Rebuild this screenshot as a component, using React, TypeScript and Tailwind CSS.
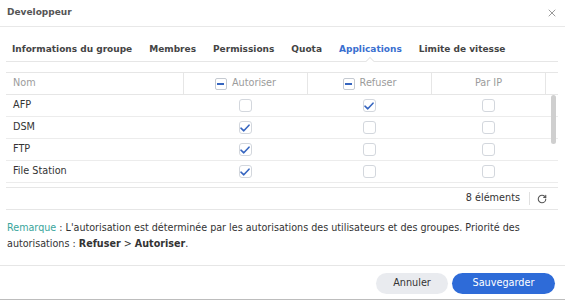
import { RotateCw, X } from 'lucide-react'

const rows = [
  { name: 'AFP', allow: false, deny: true },
  { name: 'DSM', allow: true, deny: false },
  { name: 'FTP', allow: true, deny: false },
  { name: 'File Station', allow: true, deny: false },
  { name: '', allow: false, deny: false },
]

const tabs = [
  'Informations du groupe',
  'Membres',
  'Permissions',
  'Quota',
  'Applications',
  'Limite de vitesse',
]

function Checkbox({ checked }: { checked?: boolean }) {
  return (
    <span className="flex size-[13px] items-center justify-center rounded-[3px] border border-[#d3d7dd] bg-white">
      {checked && (
        <svg width="10" height="8" viewBox="0 0 10 8" fill="none">
          <path
            d="M1 4.2 3.8 6.8 9 1.2"
            stroke="#3766c0"
            strokeWidth="1.6"
            strokeLinecap="round"
            strokeLinejoin="round"
          />
        </svg>
      )}
    </span>
  )
}

function MinusBox() {
  return (
    <span className="flex size-[12px] items-center justify-center rounded-[2px] border border-[#c5cad1] bg-white">
      <span className="h-[2px] w-[7px] bg-[#3766c0]" />
    </span>
  )
}

export default function App() {
  return (
    <div className="flex h-[300px] w-[565px] flex-col border-b border-[#bdbdbd] bg-white font-['DejaVu_Sans',sans-serif] text-[#333]">
      <div className="flex h-[27px] shrink-0 items-center justify-between border-b border-[#e8e8e8] pl-[7px] pr-[7px]">
        <span className="text-[9px] font-bold text-[#555]">Developpeur</span>
        <X size={12} strokeWidth={1.8} className="text-[#8f8f8f]" />
      </div>

      <div className="px-[6px] pr-[7px]">
        <div className="flex h-[35px] items-end gap-[17px] border-b border-[#e6e6e6] pb-[6px] pl-[6px]">
          {tabs.map((t) => (
            <div
              key={t}
              className={`relative text-[9px] font-bold leading-[12px] ${
                t === 'Applications' ? 'text-[#3a6fd0]' : 'text-[#444]'
              }`}
            >
              {t}
              {t === 'Applications' && (
                <span className="absolute left-1/2 top-[15px] size-[6px] -translate-x-1/2 rotate-45 border-l border-t border-[#e6e6e6] bg-white" />
              )}
            </div>
          ))}
        </div>

        <div className="mt-[10px] text-[9.7px]">
          <div className="grid h-[23px] grid-cols-[177px_124px_124px_115px_1fr] border-y border-[#e6e6e6] text-[#9b9b9b]">
            <div className="flex items-center pl-[7px]">Nom</div>
            <div className="flex items-center justify-center gap-[5px] border-l border-[#e6e6e6]">
              <MinusBox />
              Autoriser
            </div>
            <div className="flex items-center justify-center gap-[5px] border-l border-[#e6e6e6]">
              <MinusBox />
              Refuser
            </div>
            <div className="flex items-center justify-center border-x border-[#e6e6e6]">Par IP</div>
            <div />
          </div>

          <div className="relative h-[92px] overflow-hidden">
            {rows.map((r, i) => (
              <div
                key={i}
                className="grid h-[22px] grid-cols-[177px_124px_124px_115px] border-b border-[#ececec]"
              >
                <div className="flex items-center pl-[7px]">{r.name}</div>
                <div className="flex items-center justify-center">
                  <Checkbox checked={r.allow} />
                </div>
                <div className="flex items-center justify-center">
                  <Checkbox checked={r.deny} />
                </div>
                <div className="flex items-center justify-center">
                  <Checkbox />
                </div>
              </div>
            ))}
            <span className="absolute right-[2px] top-0 h-[49px] w-[5px] rounded-full bg-[#cfcfcf]" />
          </div>

          <div className="flex h-[23px] items-center justify-end border-y border-[#e6e6e6] pr-[11px]">
            <span>8 éléments</span>
            <span className="ml-[9px] mr-[7px] h-[13px] w-px bg-[#e0e0e0]" />
            <RotateCw size={10} strokeWidth={2.6} className="text-[#555]" />
          </div>
        </div>
      </div>

      <div className="px-[7px] pb-[13px] pt-[10px] text-[9.6px] leading-[16px]">
        <p>
          <span className="text-[#3aa59c]">Remarque</span> : L'autorisation est déterminée par
          les autorisations des utilisateurs et des groupes. Priorité des
        </p>
        <p>
          autorisations : <b>Refuser</b> &gt; <b>Autoriser</b>.
        </p>
      </div>

      <div className="flex flex-1 items-start justify-end gap-[4px] border-t border-[#e6e6e6] pr-[10px] pt-[7px]">
        <button className="h-[21px] w-[72px] rounded-full bg-[#e9ebef] text-[9.7px] text-[#333]">
          Annuler
        </button>
        <button className="h-[21px] w-[103px] rounded-full bg-[#2e6bd8] text-[9.7px] text-white">
          Sauvegarder
        </button>
      </div>
    </div>
  )
}
